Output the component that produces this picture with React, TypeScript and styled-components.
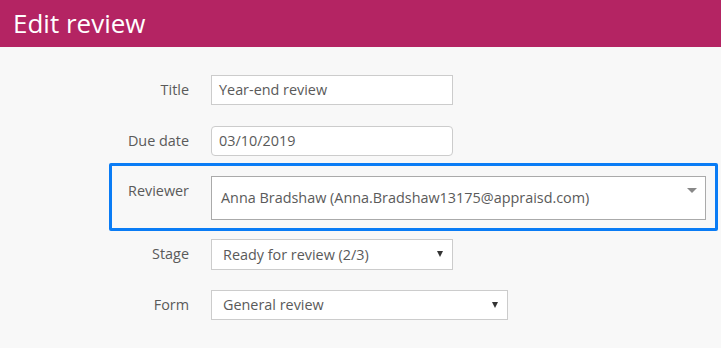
import styled, { createGlobalStyle } from "styled-components";

const GlobalStyle = createGlobalStyle`
  html, body {
    margin: 0;
    padding: 0;
    background: #f8f8f8;
    font-family: "Open Sans", "Liberation Sans", sans-serif;
  }
`

const Header = styled.header`
  height: 47px;
  background: #b42463;
  display: flex;
  align-items: center;
  padding-left: 13px;
`

const Heading = styled.h1`
  margin: 0;
  color: #fff;
  font-size: 26px;
  font-weight: 400;
  line-height: 1;
  margin-top: -2px;
`

const Form = styled.div`
  display: flex;
  flex-direction: column;
  padding: 28px 0 0 109px;
`

const Row = styled.div<{ $gap: number }>`
  display: flex;
  align-items: flex-start;
  padding-left: 3px;
  margin-top: ${p => p.$gap}px;
`

// the row currently in focus gets a blue frame round it
const FocusRow = styled(Row)`
  width: 594px;
  padding: 10px 9px 8px 0;
  border: 3px solid #0a7cf5;
  border-radius: 2px;
`

const Label = styled.label`
  width: 77px;
  flex-shrink: 0;
  margin-right: 22px;
  text-align: right;
  font-size: 14.4px;
  line-height: 30px;
  color: #5a5a5a;
`

const Input = styled.div<{ $width: number; $rounded?: boolean }>`
  box-sizing: border-box;
  width: ${p => p.$width}px;
  height: 30px;
  background: #fff;
  border: 1px solid #ccc;
  border-radius: ${p => (p.$rounded ? '4px' : '0')};
  padding-left: 7px;
  font-size: 14.4px;
  line-height: 28px;
  color: #5a5a5a;
`

const Select = styled.div<{ $width: number; $height: number; $muted?: boolean }>`
  box-sizing: border-box;
  position: relative;
  width: ${p => p.$width}px;
  height: ${p => p.$height}px;
  background: #fff;
  border: 1px solid ${p => (p.$muted ? '#aaa' : '#ccc')};
  padding-left: ${p => (p.$muted ? 9 : 11)}px;
  font-size: 14.4px;
  line-height: ${p => p.$height - 2}px;
  color: #5a5a5a;
`

const Arrow = styled.span<{ $muted?: boolean }>`
  position: absolute;
  right: ${p => (p.$muted ? 8 : 9)}px;
  top: 11px;
  width: 0;
  height: 0;
  border-left: ${p => (p.$muted ? 5 : 3)}px solid transparent;
  border-right: ${p => (p.$muted ? 5 : 3)}px solid transparent;
  border-top: ${p => (p.$muted ? 5 : 6)}px solid ${p => (p.$muted ? '#888' : '#333')};
`

export default function App() {
  return (
    <>
      <GlobalStyle />
      <Header>
        <Heading>Edit review</Heading>
      </Header>
      <Form>
        <Row $gap={0}>
          <Label>Title</Label>
          <Input $width={242}>Year-end review</Input>
        </Row>
        <Row $gap={21}>
          <Label>Due date</Label>
          <Input $width={242} $rounded>03/10/2019</Input>
        </Row>
        <FocusRow $gap={7}>
          <Label>Reviewer</Label>
          <Select $width={495} $height={44} $muted>
            Anna Bradshaw (Anna.Bradshaw13175@appraisd.com)
            <Arrow $muted />
          </Select>
        </FocusRow>
        <Row $gap={8}>
          <Label>Stage</Label>
          <Select $width={242} $height={31}>
            Ready for review (2/3)
            <Arrow />
          </Select>
        </Row>
        <Row $gap={20}>
          <Label>Form</Label>
          <Select $width={297} $height={30}>
            General review
            <Arrow />
          </Select>
        </Row>
      </Form>
    </>
  )
}
